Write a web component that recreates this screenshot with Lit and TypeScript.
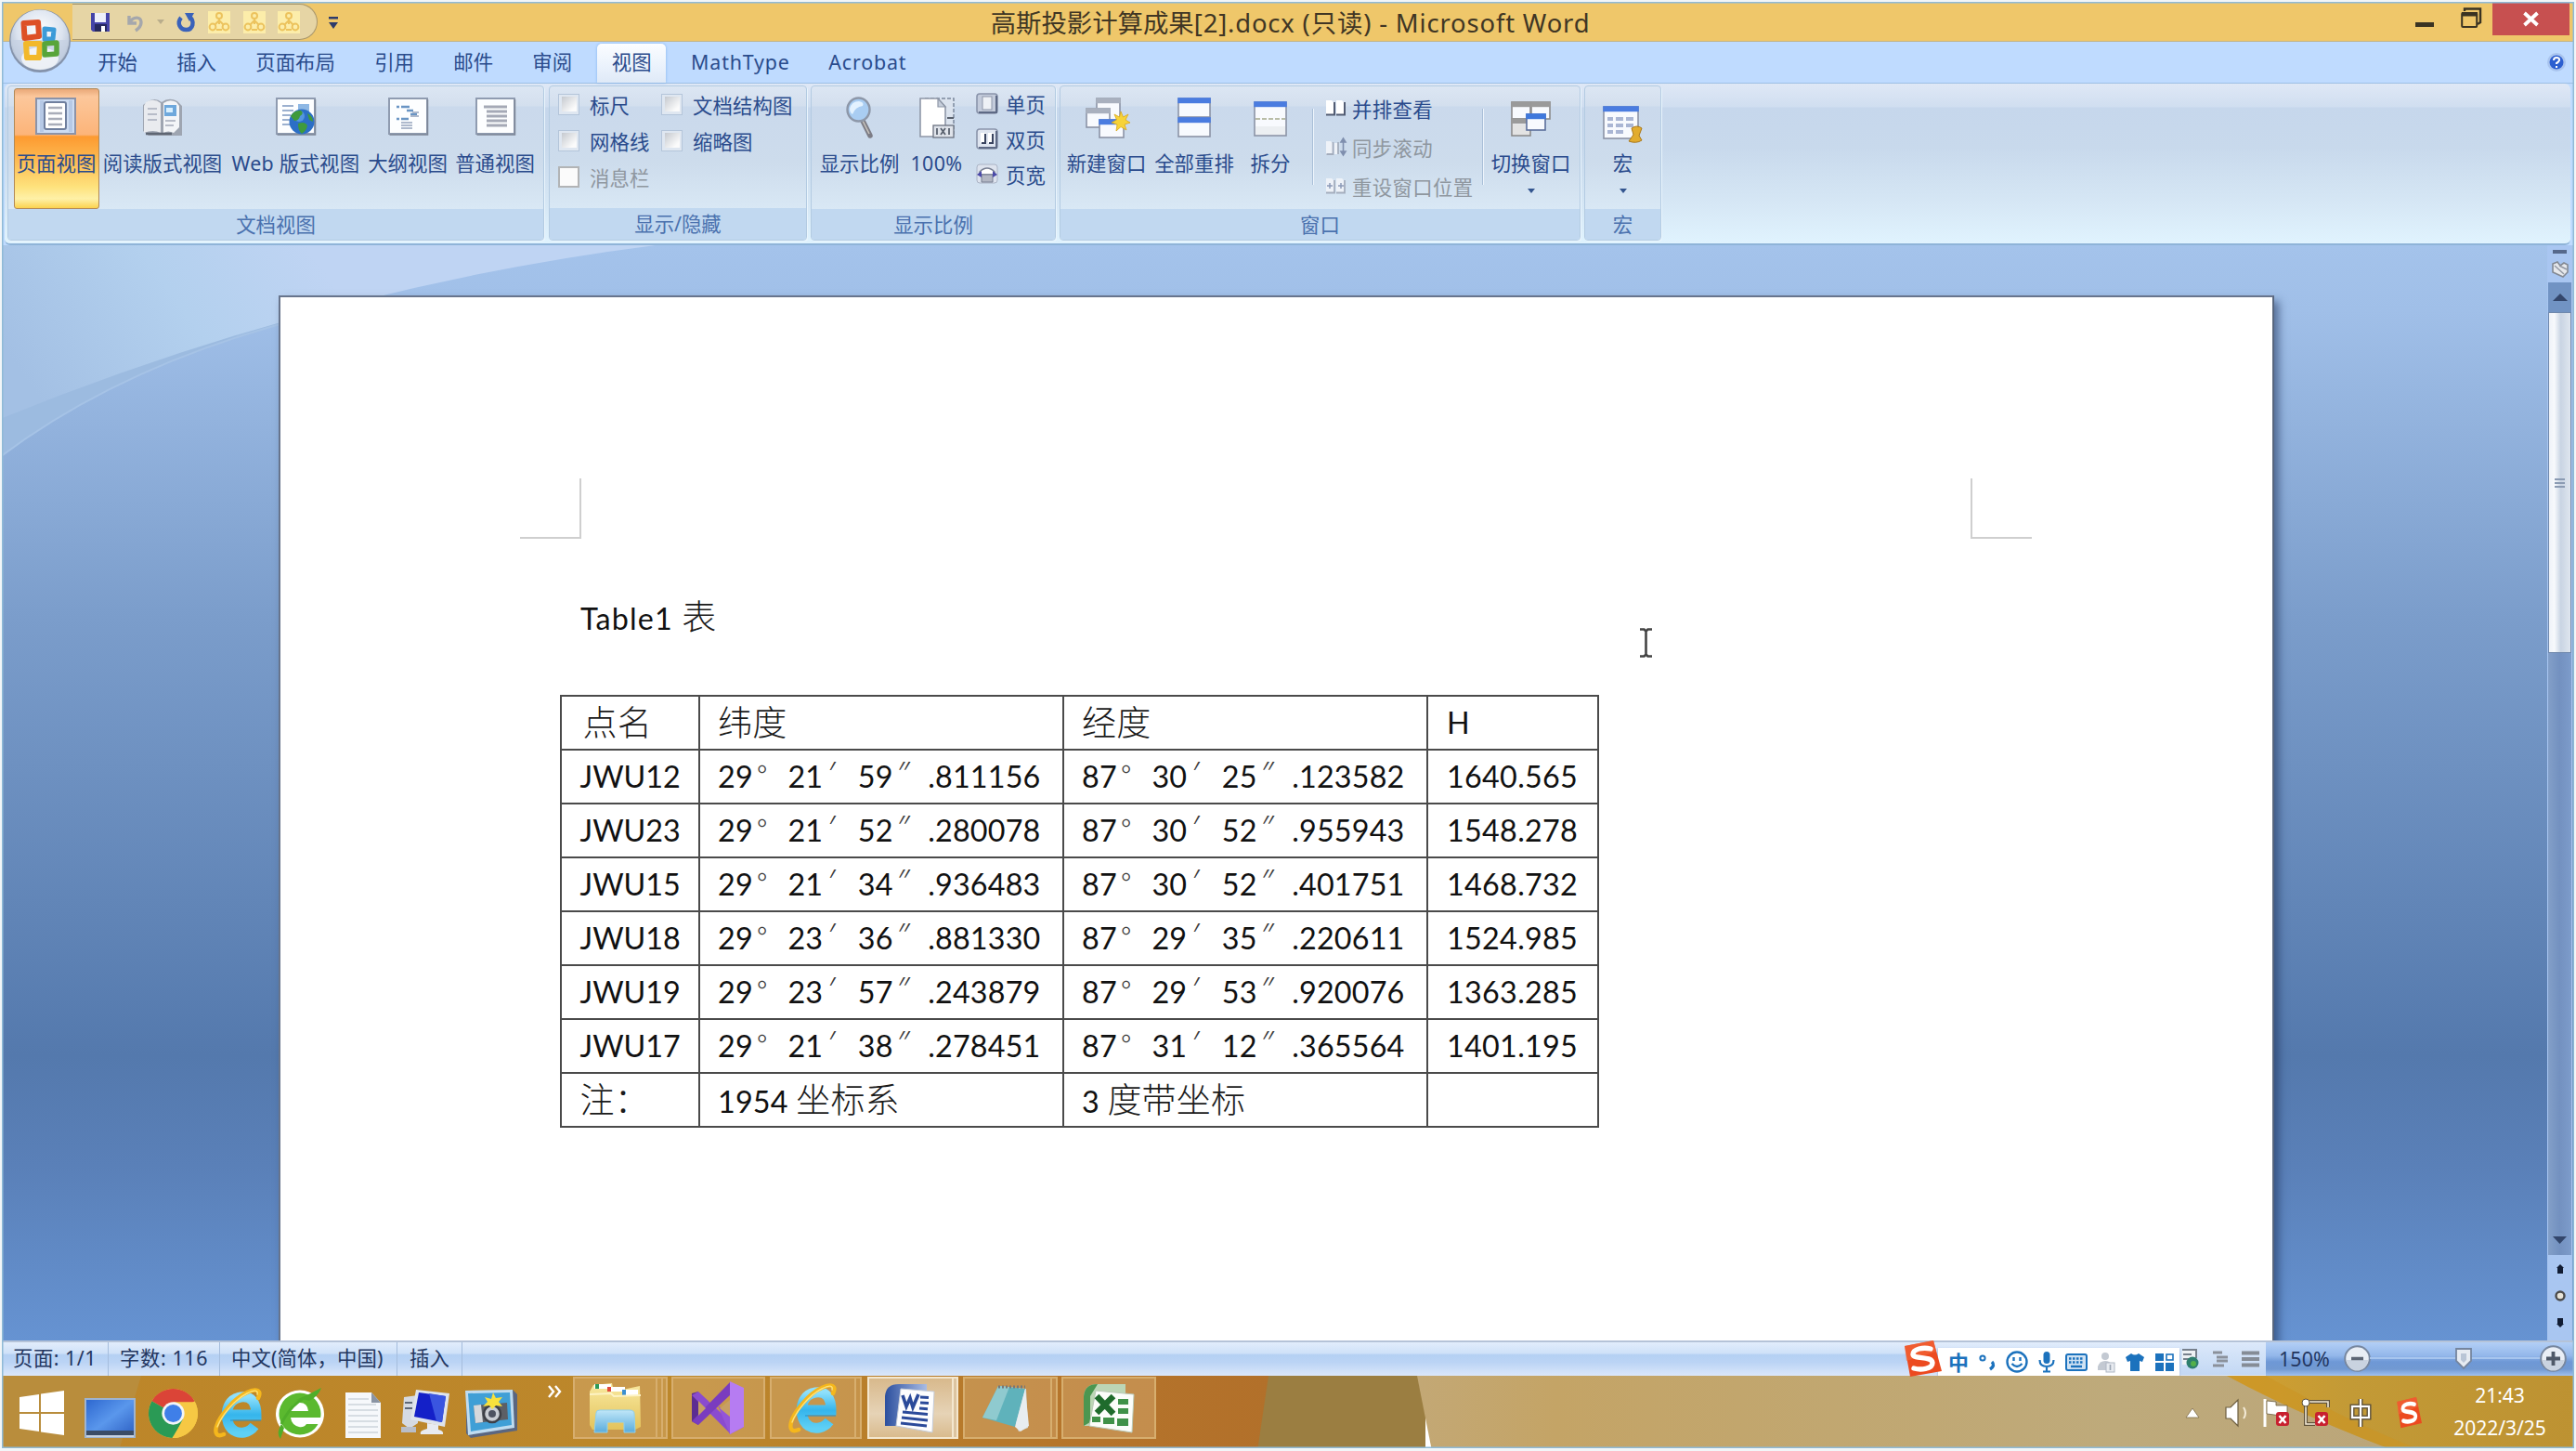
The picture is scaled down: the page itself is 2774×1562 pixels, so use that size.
import { LitElement, html, css, svg, nothing } from "lit";
import { customElement } from "lit/decorators.js";

const icon = (w: number, h: number, body: unknown, vb = `0 0 ${w} ${h}`) =>
  html`<svg class="ic" width=${w} height=${h} viewBox=${vb} preserveAspectRatio="none">${body}</svg>`;

/* ---------- artwork used in more than one place ---------- */
const ieMark = (id: string) => svg`
  <defs><linearGradient id=${id} x1="0" y1="0" x2="0" y2="1"><stop offset="0" stop-color="#8fe0fb"/><stop offset=".5" stop-color="#35b5ec"/><stop offset="1" stop-color="#5fd0f5"/></linearGradient></defs>
  <path fill="none" stroke="url(#${id})" stroke-width="11" d="M46 42C40 50 30 51 24 47C16 42 14 28 19 19C24 10 38 8 44 15C47 19 48 25 48 30L20 30"/>
  <path d="M53 36L20 36" stroke="#1e8fd0" stroke-width="1"/>
  <path fill="none" stroke="#f5b71c" stroke-width="4.5" stroke-linecap="round" d="M50 12C54 4 48 1 38 6C24 12 8 32 5 43C3 51 6 54 13 51"/>
  <path fill="none" stroke="#fde27a" stroke-width="1.4" stroke-linecap="round" d="M49 8C50 3 46 3 38 7C24 14 10 32 6 43"/>`;

const sogou = svg`
  <path d="M2 6L33 0L42 33L8 39Z" fill="#ec4a20"/><path d="M2 6L33 0L36 12L4 22Z" fill="#f4693c" opacity=".6"/>
  <path fill="none" stroke="#fff" stroke-width="5.4" stroke-linecap="round" d="M30 9C22 7 11 9 11 15C12 21 31 16 32 24C32 31 19 32 12 30"/>`;

const folder = svg`
  <defs><linearGradient id="fo" x1="0" y1="0" x2="0" y2="1"><stop offset="0" stop-color="#f9e99f"/><stop offset="1" stop-color="#e3c35c"/></linearGradient>
  <linearGradient id="fb" x1="0" y1="0" x2="0" y2="1"><stop offset="0" stop-color="#bfe6f8"/><stop offset="1" stop-color="#5aacdc"/></linearGradient></defs>
  <path d="M5 3L25 1L27 10L55 4L56 48L50 51L4 51L1 46L1 10Z" fill="url(#fo)"/>
  <path d="M6 2h18v5h-18z" fill="#fff"/><path d="M7 2h4v5h-4z" fill="#2d9a58"/>
  <path d="M20 5h19v5h-19z" fill="#fff"/><path d="M20 5h4v5h-4z" fill="#e04a3c"/>
  <path d="M36 8h17v6h-17z" fill="#fff"/><path d="M36 8h4v6h-4z" fill="#3b8fd0"/>
  <path d="M1 13L24 12L27 15L56 14" stroke="#fdf3c4" stroke-width="2" fill="none"/>
  <path d="M8 33Q8 30 12 30H44Q49 30 49 34L50 54H38V43H20V54H6Z" fill="url(#fb)" stroke="#8fd0ee" stroke-width="1"/>`;

const docStyles = css`
  .ic { display: block; flex: none; overflow: visible; }
`;

/* ================= title bar ================= */
@customElement("title-bar")
class TitleBar extends LitElement {
  static styles = [docStyles, css`
    :host { display: flex; height: 45px; background: #efc76a; box-sizing: border-box; border-bottom: 1px solid #c2b48a;
      font-family: "Noto Sans", "Noto Sans CJK SC", sans-serif; color: #403624; position: relative; }
    .qat { display: flex; align-items: center; height: 39px; margin-top: 4px; width: 264px; margin-left: 78px; box-sizing: border-box;
      border: 1.5px solid #a8966c; border-left: 0; border-radius: 0 20px 20px 0; background: #e6d5a5; padding-left: 19px; position: relative; }
    .gap1 { margin-left: 18px; } .gap3 { margin-left: 14px; } .gap4 { margin-left: 14px; } .gap5 { margin-left: 13.5px; }
    .more { margin: 17px 0 0 12px; }
    .title { position: absolute; left: 0; right: 0; top: 3px; text-align: center; font-size: 27.4px; line-height: 44px; white-space: nowrap; padding-left: 5px; }
    .title span { letter-spacing: .85px; }
    .win { margin-left: auto; display: flex; }
    .min { margin: 24px 29px 0 0; } .max { margin: 8px 12px 0 0; }
    .close { width: 83px; height: 35px; margin: 3px 7px 0 0; background: #c75050; display: flex; align-items: center; justify-content: center; }
  `];
  render() {
    const orgBox = (cls: string) => html`<div class=${cls}>${icon(24, 24, svg`<rect width="24" height="24" fill="#fcedaa"/>
      <g fill="none" stroke="#ecc35e" stroke-width="2"><circle cx="12" cy="5" r="3"/><circle cx="5" cy="17" r="3.4"/><circle cx="19" cy="17" r="3.4"/><path d="M12 8v6M12 10L7 15M12 10L17 15M9 20h6"/></g>`)}</div>`;
    return html`
      <div class="qat">
        ${icon(22, 22, svg`<path d="M1 1h20v20h-18l-2-2z" fill="#4544a8"/><rect x="5" y="1" width="12" height="10" fill="#eef0fb"/><rect x="5" y="13" width="13" height="8" fill="#26285e"/><rect x="12" y="15" width="4" height="6" fill="#fff"/>`)}
        <div class="gap1">${icon(18, 20, svg`<path d="M2 3v8h8M3 10C6 4 15 3 15 10C15 14 12 17 9 19" fill="none" stroke="#a5a7ac" stroke-width="3.4"/>`)}</div>
        <div class="gap3">${icon(8, 5, svg`<path d="M0 0h8l-4 5z" fill="#b9ad8c"/>`)}</div>
        <div class="gap4">${icon(19, 20, svg`<path d="M4 5C-1 11 3 18 9.500 18C17 18 19 9 13 4" fill="none" stroke="#3a62ba" stroke-width="4.400"/><path d="M8 0h10l-5 9z" fill="#3a62ba"/>`)}</div>
        ${orgBox("gap3")}${orgBox("gap5")}${orgBox("gap5")}
      </div>
      <div class="more">${icon(10, 15, svg`<path d="M0 1h10v2.500h-10zM0 7h10l-5 7z" fill="#2d3b6b"/>`)}</div>
      <div class="title">高斯投影计算成果<span>[2].docx (只读) - Microsoft Word</span></div>
      <div class="win">
        <div class="min">${icon(20, 5, svg`<rect width="20" height="5" fill="#3a3322"/>`)}</div>
        <div class="max">${icon(22, 22, svg`<path d="M4 4V1.500H21V16L18 18" fill="none" stroke="#3a3322" stroke-width="2.400"/><rect x="1.200" y="6" width="16" height="15" rx="1" fill="none" stroke="#3a3322" stroke-width="2"/><rect x="1" y="5" width="17" height="4.500" fill="#3a3322"/>`)}</div>
        <div class="close">${icon(17, 15, svg`<path d="M1.500 1L15.500 14M15.500 1L1.500 14" stroke="#fff" stroke-width="3.800"/>`)}</div>
      </div>`;
  }
}

/* ================= ribbon ================= */
const page = (body: unknown) => svg`<rect x="1" y="1" width="41" height="38" fill="#fdfeff" stroke="#8f9bb0" stroke-width="2"/>
  <path d="M42.500 2v38h-41" fill="none" stroke="#7d8797" stroke-width="1.500"/>${body}`;

const winPane = (x: number, y: number, w: number, h: number, bar: string, edge = "#8b93a6") => svg`
  <rect x=${x} y=${y} width=${w} height=${h} fill="#f8fafe" stroke=${edge} stroke-width="1.600"/>
  <rect x=${x - .8} y=${y - .8} width=${w + 1.6} height="6" fill=${bar}/>`;

const pictures: Record<string, unknown> = {
  print: icon(45, 40, svg`<rect x="1" y="1" width="42" height="38" fill="#cddcf2" stroke="#8c93a8" stroke-width="2"/><path d="M5 3h4v34h-4zM36 3h4v34h-4z" fill="#b6c9e6"/>
    <rect x="10" y="5" width="23" height="29" rx="2" fill="#fff" stroke="#6f7f9e" stroke-width="2"/><g stroke="#a9adb9" stroke-width="2.400"><path d="M14 11h15M14 17h15M14 23h15M14 29h15"/></g>`),
  read: icon(44, 42, svg`<path d="M5 5Q14 -1 21 5Q29 -1 38 4L43 9V41L7 41L1 36V8Z" fill="#9ea5b1"/><path d="M4 5Q13 0 20 6V38Q12 34 2 38V9Z" fill="#e9ebef"/><path d="M23 6Q30 1 37 5L40 9V32L34 38Q28 35 23 38Z" fill="#f3f5f8"/>
    <g stroke="#b7bcc8" stroke-width="2"><path d="M6 12h10M6 18h10M6 24h10M25 25h11M25 30h9"/></g><rect x="24" y="8" width="13" height="12" fill="#6ea8dc"/><rect x="26" y="11" width="7" height="5" fill="#d8f0ff"/><path d="M4 39h28" stroke="#5e6673" stroke-width="2.400"/>`),
  web: icon(44, 41, svg`${page(svg`<g stroke="#9bb0cf" stroke-width="2"><path d="M7 9h12M7 14h12M7 19h9M7 24h8M7 29h8"/></g><rect x="24" y="7" width="12" height="8" fill="#8db7e4"/>`)}
    <circle cx="28" cy="26" r="13.500" fill="#2c6fc6"/><circle cx="25" cy="20" r="6" fill="#6fb0f0" opacity=".6"/><path d="M16 20Q20 13 27 14Q31 17 26 20Q25 25 20 25ZM24 28Q31 25 34 30Q33 36 28 39Q24 36 24 28ZM34 17Q40 20 40 26L36 24Z" fill="#3f9a3c"/>`),
  outline: icon(43, 40, page(svg`<g stroke="#6a95c4" stroke-width="2.400"><path d="M9 10h3M14 10h9M20 14h7M24 18h7M9 23h3M14 23h8"/></g><g stroke="#aeb9cc" stroke-width="2"><path d="M26 16h7M24 20h9M14 27h12M14 30h12M14 33h12"/></g>`)),
  draft: icon(43, 40, page(svg`<g stroke="#a5a9b6" stroke-width="3"><path d="M9 10h25M12 15h22M12 20h22M12 25h22M12 30h22"/></g>`)),
  zoom: icon(30, 44, svg`<path d="M17 23L26 41" stroke="#7d7d86" stroke-width="5.500" stroke-linecap="round"/><path d="M18 25L25 39" stroke="#c9c4bd" stroke-width="1.500"/><ellipse cx="13.500" cy="13" rx="12" ry="12.500" fill="#a9cdf2" stroke="#8d97a8" stroke-width="2.400"/><path d="M4 12Q6 4 14 4Q20 5 18 9Q10 10 7 18Q4 16 4 12Z" fill="#e3f2ff"/>`),
  hundred: icon(38, 44, svg`<rect x="6" y="1" width="31" height="38" fill="#dbe3ee" stroke="#7b889c" stroke-width="1.500" stroke-dasharray="4 2"/><path d="M1 1H20L28 10V42H1Z" fill="#fff" stroke="#8e97a7" stroke-width="1.600"/><path d="M20 1V10H28Z" fill="#c6cedb" stroke="#8e97a7" stroke-width="1.200"/><rect x="15" y="30" width="22" height="13" fill="#dfe3ea" stroke="#6b7280" stroke-width="1.300"/><path d="M19 33v7M23 33l5 7M28 33l-5 7M32 33v7M30 22h7" stroke="#59616e" stroke-width="1.800"/>`),
  newwin: icon(46, 44, svg`${winPane(12, 1, 25, 24, "#a9b0be")}${winPane(1, 12, 25, 20, "#a9b0be")}${winPane(15, 24, 26, 19, "#4a7ce0")}
    <path d="M38 15L40.500 21L46 18L43 24L48 27L42 29L44 35L38 31.500L33 36L34 29L28 27L33.500 24L31 18L36.500 21Z" fill="#f7d338" stroke="#d9a81c" stroke-width=".8"/>`),
  arrange: icon(36, 44, svg`${winPane(1, 1, 34, 20, "#4a7ce0")}${winPane(1, 22, 34, 20, "#4a7ce0")}`),
  split: icon(36, 38, svg`${winPane(1, 1, 34, 36, "#4a7ce0")}<path d="M2 19h32" stroke="#b9bda8" stroke-width="2" stroke-dasharray="5 2"/><path d="M2 27h32v9h-32z" fill="#eceff2"/>`),
  switch: icon(44, 40, svg`${winPane(1, 1, 20, 18, "#9a9a9a", "#8a8a8a")}${winPane(22, 1, 20, 18, "#9a9a9a", "#8a8a8a")}${winPane(1, 19, 20, 18, "#9a9a9a", "#8a8a8a")}<rect x="2" y="25" width="18" height="11" fill="#e3e3e3"/>${winPane(17, 14, 20, 17, "#3f78dc", "#5a6f9c")}`),
  macro: icon(44, 40, svg`${winPane(1, 1, 37, 34, "#4a7ce0")}<g fill="#aab6d4"><path d="M5 12h6v4h-6zM14 12h8v4h-8zM25 12h8v4h-8zM5 19h6v4h-6zM14 19h8v4h-8zM25 19h8v4h-8zM5 26h6v4h-6zM14 26h8v4h-8z"/></g><path d="M31 24Q37 20 42 24L39 32L42 37Q36 41 28 38L33 31Z" fill="#e2ac2f" stroke="#a9771a" stroke-width="1"/>`),
};

const smallPics: Record<string, unknown> = {
  one: icon(24, 23, svg`<rect x="1" y="1" width="22" height="21" rx="3" fill="#c3cbdb" stroke="#8a94ab" stroke-width="1.600"/><path d="M22 3v18h-19" fill="none" stroke="#5d6985" stroke-width="2"/><rect x="7" y="4" width="10" height="14" fill="#eef1f6" stroke="#8f98ab"/>`),
  two: icon(24, 23, svg`<rect x="1" y="1" width="22" height="21" rx="3" fill="#dfe5f0" stroke="#8a94ab" stroke-width="1.600"/><path d="M22 3v18h-19" fill="none" stroke="#5d6985" stroke-width="2"/><path d="M5 5h6v11h-6zM13 5h6v11h-6z" fill="#fff"/><path d="M10 6v10h-4M18 6v10h-4" fill="none" stroke="#39435f" stroke-width="2"/>`),
  width: icon(24, 23, svg`<rect x="1" y="1" width="22" height="20" rx="3" fill="#dde3ee" stroke="#aab3c4"/><path d="M4 9Q12 1 20 9V12H4Z" fill="#fff" stroke="#777f92" stroke-width="1.500"/><path d="M6 12h12v8h-12z" fill="#b3b7c3" stroke="#777f92"/><path d="M1 12L6 8V15ZM23 12L18 8V15Z" fill="#4a49a8"/>`),
  side: icon(23, 20, svg`<path d="M1 2h6l3 3v12h-9zM12 2h6l3 3v12h-9z" fill="#fff"/><path d="M10 4v13.500h-9M21 4v13.500h-9" fill="none" stroke="#525c73" stroke-width="2"/>`),
  sync: icon(23, 20, svg`<path d="M1 4h5l3 3v11h-8zM10 6h4v12h-4z" fill="#eef2f8"/><path d="M8.500 5v13h-7M14 5v13" fill="none" stroke="#a4adbd" stroke-width="1.800"/><path d="M19.500 2v16M17 5l2.500-4l2.500 4zM17 15l2.500 4l2.500-4z" stroke="#7f8fae" stroke-width="1.600" fill="#7f8fae"/>`),
  reset: icon(23, 20, svg`<path d="M1 2h6l3 3v12h-9zM12 2h6l3 3v12h-9z" fill="#eef2f8"/><path d="M10 4v13.500h-9M21 4v13.500h-9" fill="none" stroke="#a4adbd" stroke-width="1.800"/><path d="M2 10h6M5 7v6M14 10h6M17 7v6" stroke="#8d9bb8" stroke-width="1.500"/>`),
};

@customElement("word-ribbon")
class WordRibbon extends LitElement {
  static styles = [docStyles, css`
    :host { display: block; font-family: "Noto Sans", "Noto Sans CJK SC", sans-serif; font-size: 21.4px; color: #2a4b8c; background: #bfdbff; white-space: nowrap; }
    .tabs { display: flex; height: 45px; box-sizing: border-box; padding: 3px 0 0 84px; align-items: flex-end; border-bottom: 1px solid #9dbfe4; }
    .tab { padding: 0 21.150px; height: 42px; line-height: 40px; }
    .tab.lat { letter-spacing: .85px; padding: 0 20.500px 0 21px; }
    .tab.on { padding: 0 15.500px; margin: 0 6px; background: linear-gradient(#fbfdff, #eaf2fc 60%, #dfe9f7); border-radius: 5px 5px 0 0; box-shadow: 0 0 3px #7fb0ea; }
    .help { margin-left: auto; margin-right: 11px; align-self: center; margin-top: -3px; }
    .body { display: flex; gap: 4px; height: 174px; box-sizing: border-box; margin: 0 6px 0 5px; padding: 2px 0 3px 3px; border-bottom: 2px solid #8fb4d8;
      border-radius: 6px; background: linear-gradient(#dfe8f6 0, #d0def0 25px, #c6d7ec 26px, #c8d9ec 40%, #d6e7f5 75%, #e0f3fe 100%); }
    .group { display: flex; flex-direction: column; box-sizing: border-box; border: 1px solid #b3cbe2; border-radius: 4px; box-shadow: 1px 1px 0 #eaf5fd;
      background: linear-gradient(#dce6f3 0, #d3dfee 21px, #cad9ec 22px, #cddcec 50%, #d9e8f5 132px); overflow: hidden; }
    .g1 { width: 578px; } .g2 { width: 278px; margin-left: 1px; } .g3 { width: 264px; } .g4 { width: 561px; } .g5 { width: 83px; }
    .row { display: flex; flex: 1; }
    .label { height: 34px; line-height: 34px; text-align: center; background: #c1d8f0; color: #4a71ae; }
    .g1 .row { padding-left: 5.500px; }
    .big { display: flex; flex-direction: column; align-items: center; height: 130px; margin-top: 2px; box-sizing: border-box; flex: none; }
    .pic { height: 49px; padding-top: 10px; }
    .split, .switch { margin-top: 4px; } .macro { margin-top: 9px; }
    .cap { line-height: 30px; margin-top: 7px; }
    .big.on { border: 1px solid #b28a58; border-radius: 3px; background: linear-gradient(#e9a878 0, #fcc79b 8px, #fcb479 49px, #fd9a30 51px, #fdb850 75px, #fee27c 105px, #fef1a8 118px, #fbd24e 100%); }
    .big.on .pic { padding-top: 9px; }
    .w92 { width: 92px; } .w137 { width: 137px; } .w150 { width: 150px; letter-spacing: .25px; } .w91 { width: 91px; } .w97 { width: 97px; }
    .wz { width: 105px; margin-left: -1px; } .wh { width: 61px; letter-spacing: .4px; } .wn { width: 99px; } .wa { width: 90px; } .ws { width: 74px; } .wc { width: 101px; } .wm { width: 81px; }
    .checks { display: grid; grid-template-columns: 111px auto; grid-auto-rows: 38.900px; align-content: start; padding: 0 0 0 9px; letter-spacing: .1px; }
    .check { display: flex; align-items: center; gap: 11px; height: 38.900px; }
    .box { width: 23px; height: 23px; box-sizing: border-box; border: 1.500px solid #b4c5da; background: #dfe7f1; padding: 2.500px; }
    .box i { display: block; width: 100%; height: 100%; background: linear-gradient(135deg, #c5c9cf, #fbfbfb 80%); }
    .box.off { border: 2px solid #b2b4b6; background: #fbfbfb; } .box.off i { background: #fbfbfb; }
    .dim { color: #8f979f; }
    .stack { display: flex; flex-direction: column; }
    .smalls { padding: 0 0 0 12px; margin-top: -1px; }
    .small { display: flex; align-items: center; gap: 8px; height: 38px; }
    .tall { padding: 2px 0 0 12px; width: 181px; box-sizing: border-box; letter-spacing: .35px; } .tall .small { height: 42px; gap: 6px; }
    .bar { width: 1px; height: 82px; background: #a9bfd8; border-right: 1px solid #eef5fc; margin-top: 24px; flex: none; }
    .bar.first { margin-left: 8px; }
    .arr { margin-top: 12px; }
  `];
  big(p: string, text: string, cls: string, arrow = false) {
    return html`<div class="big ${cls}"><div class="pic"><div class=${p}>${pictures[p]}</div></div><div class="cap">${text}</div>
      ${arrow ? html`<div class="arr">${icon(8, 5, svg`<path d="M0 0h8l-4 5z" fill="#33558f"/>`)}</div>` : nothing}</div>`;
  }
  check(text: string, off = false) {
    return html`<div class="check ${off ? "dim" : ""}"><div class="box ${off ? "off" : ""}"><i></i></div>${text}</div>`;
  }
  small(p: string, text: string, off = false) {
    return html`<div class="small ${off ? "dim" : ""}">${smallPics[p]}${text}</div>`;
  }
  render() {
    return html`
      <div class="tabs">
        ${["开始", "插入", "页面布局", "引用", "邮件", "审阅"].map((t) => html`<div class="tab">${t}</div>`)}
        <div class="tab on">视图</div><div class="tab lat">MathType</div><div class="tab lat">Acrobat</div>
        <div class="help">${icon(20, 22, svg`<circle cx="10" cy="11" r="10" fill="#a9c4ee"/><circle cx="10" cy="11" r="7.500" fill="#2c5fd0"/><path d="M7 9Q7 6 10 6Q13.500 6 13 9Q12 11 10 12V13M10 15v2" fill="none" stroke="#fff" stroke-width="2"/>`)}</div>
      </div>
      <div class="body">
        <div class="group g1"><div class="row">
          ${this.big("print", "页面视图", "w92 on")}${this.big("read", "阅读版式视图", "w137")}${this.big("web", "Web 版式视图", "w150")}${this.big("outline", "大纲视图", "w91")}${this.big("draft", "普通视图", "w97")}
        </div><div class="label">文档视图</div></div>
        <div class="group g2"><div class="row checks">
          ${this.check("标尺")}${this.check("文档结构图")}${this.check("网格线")}${this.check("缩略图")}${this.check("消息栏", true)}
        </div><div class="label">显示/隐藏</div></div>
        <div class="group g3"><div class="row">
          ${this.big("zoom", "显示比例", "wz")}${this.big("hundred", "100%", "wh")}
          <div class="stack smalls">${this.small("one", "单页")}${this.small("two", "双页")}${this.small("width", "页宽")}</div>
        </div><div class="label">显示比例</div></div>
        <div class="group g4"><div class="row">
          ${this.big("newwin", "新建窗口", "wn")}${this.big("arrange", "全部重排", "wa")}${this.big("split", "拆分", "ws")}
          <div class="bar first"></div>
          <div class="stack tall">${this.small("side", "并排查看")}${this.small("sync", "同步滚动", true)}${this.small("reset", "重设窗口位置", true)}</div>
          <div class="bar"></div>
          ${this.big("switch", "切换窗口", "wc", true)}
        </div><div class="label">窗口</div></div>
        <div class="group g5"><div class="row">${this.big("macro", "宏", "wm", true)}</div><div class="label">宏</div></div>
      </div>`;
  }
}

/* ================= document ================= */
const points = [
  ["JWU12", "29", "21", "59", ".811156", "87", "30", "25", ".123582", "1640.565"],
  ["JWU23", "29", "21", "52", ".280078", "87", "30", "52", ".955943", "1548.278"],
  ["JWU15", "29", "21", "34", ".936483", "87", "30", "52", ".401751", "1468.732"],
  ["JWU18", "29", "23", "36", ".881330", "87", "29", "35", ".220611", "1524.985"],
  ["JWU19", "29", "23", "57", ".243879", "87", "29", "53", ".920076", "1363.285"],
  ["JWU17", "29", "21", "38", ".278451", "87", "31", "12", ".365564", "1401.195"],
];

@customElement("doc-view")
class DocView extends LitElement {
  static styles = [docStyles, css`
    :host { display: flex; position: relative; height: 1179px; overflow: hidden;
      background: linear-gradient(#a4c3eb 0, #a0bfe8 6%, #7b9dcb 34%, #5479ad 74%, #5a80b8 84%, #6693d2 100%);
      font-family: Lato, "Noto Sans CJK SC", sans-serif; color: #111; }
    .swoosh { position: absolute; left: 0; top: 0; }
    .page { position: relative; margin: 54px 0 0 300px; width: 2149px; height: 1130px; box-sizing: border-box; background: #fff;
      border: 2px solid #67748c; border-right-color: #59677f; box-shadow: 5px 6px 9px rgba(25, 45, 85, .55); padding: 195px 259px 0 258px; }
    .marks { display: flex; justify-content: space-between; height: 65px; }
    .mark { width: 66px; box-sizing: border-box; border-bottom: 2px solid #cfcfcf; }
    .tl { border-right: 2px solid #cfcfcf; } .tr { border-left: 2px solid #cfcfcf; }
    .caption { margin: 57px 0 0 65px; font-size: 32.3px; line-height: 54px; height: 54px; white-space: pre; letter-spacing: 1.150px; }
    .cn { font-family: "Noto Sans CJK SC", sans-serif; font-weight: 300; font-size: 37px; line-height: 50px; letter-spacing: .200px; color: #1a1a1a; }
    .name { text-indent: 3px; }
    table { border-collapse: collapse; table-layout: fixed; width: 1117px; margin: 57px 0 0 43px; font-size: 32.3px; }
    td { border: 2px solid #4a4a4a; height: 58.050px; padding: 0 0 0 19.500px; box-sizing: border-box; white-space: nowrap; line-height: 54px; vertical-align: middle; }
    td > div { height: 54px; overflow: visible; }
    .c1 { width: 148.500px; } .c2 { width: 392px; } .c4 { width: 184px; }
    .n { letter-spacing: .200px; } .h { letter-spacing: .300px; padding-left: 1px; }
    .deg, .min, .sec { display: inline-block; width: 37.500px; line-height: 0; height: 0; color: #3c3c3c; letter-spacing: 0; font-weight: 300; }
    .deg { text-indent: 4px; font-family: "Noto Sans CJK SC", sans-serif; }
    .min, .sec { font-family: "Noto Sans", sans-serif; font-size: 35px; position: relative; top: -3px; }
    .min { text-indent: 6px; } .sec { text-indent: 5px; }
    .cursor { position: absolute; left: 1464px; top: 356px; }
    .side { margin-left: auto; width: 27px; margin-right: 4px; display: flex; flex-direction: column; align-items: center; background: #a9c6f1; }
    .side .dash { margin-top: 5px; } .side .ruler { margin-top: 8px; }
    .up { width: 25px; height: 32px; margin-top: 5px; background: #7193c3; display: flex; align-items: center; justify-content: center; }
    .thumb { width: 23px; height: 365px; border: 1px solid #6f88ac; background: linear-gradient(90deg, #eef2f8, #f7f9fc 25%, #c9d4e3 55%, #dfe6ef); display: flex; align-items: center; justify-content: center; }
    .track { width: 25px; height: 648px; box-sizing: border-box; background: linear-gradient(90deg, #839fc8, #7391c0 50%, #7d9ccb); display: flex; align-items: flex-end; justify-content: center; padding-bottom: 12px; }
    .nav { margin-top: 10px; display: flex; flex-direction: column; gap: 18px; align-items: center; }
  `];
  dms(d: string[]) {
    return html`<div class="n">${d[0]}<span class="deg">°</span>${d[1]}<span class="min">′</span>${d[2]}<span class="sec">″</span>${d[3]}</div>`;
  }
  render() {
    return html`
      <svg class="swoosh" width="720" height="240" viewBox="0 0 720 240">
        <defs><linearGradient id="sw" gradientUnits="userSpaceOnUse" x1="60" y1="190" x2="330" y2="0"><stop offset="0" stop-color="#a3c0e4"/><stop offset=".55" stop-color="#b3d0ee"/><stop offset="1" stop-color="#bfd4f3"/></linearGradient></defs>
        <path d="M0 228Q130 130 320 80L300 60L0 180Z" fill="#9cbbe0"/><path d="M0 228Q130 130 320 80" fill="none" stroke="#a6c3e6" stroke-width="2"/>
        <path d="M0 0H706Q350 45 0 187Z" fill="url(#sw)"/>
      </svg>
      <div class="page">
        <div class="marks"><div class="mark tl"></div><div class="mark tr"></div></div>
        <div class="caption">Table1 <span class="cn">表</span></div>
        <table>
          <colgroup><col class="c1"><col class="c2"><col class="c2"><col class="c4"></colgroup>
          <tr><td><div class="cn name">点名</div></td><td><div class="cn">纬度</div></td><td><div class="cn">经度</div></td><td><div class="h">H</div></td></tr>
          ${points.map((p) => html`<tr><td><div>${p[0]}</div></td><td>${this.dms(p.slice(1, 5))}</td><td>${this.dms(p.slice(5, 9))}</td><td><div class="h">${p[9]}</div></td></tr>`)}
          <tr><td><div class="cn">注：</div></td><td><div class="n">1954 <span class="cn">坐标系</span></div></td><td><div class="n">3 <span class="cn">度带坐标</span></div></td><td></td></tr>
        </table>
        <div class="cursor">${icon(13, 32, svg`<path d="M0 1.500H4.500L6.500 3.500L8.500 1.500H13M6.500 3V29M0 30.500H4.500L6.500 28.500L8.500 30.500H13" fill="none" stroke="#444" stroke-width="2.600"/>`)}</div>
      </div>
      <div class="side">
        <div class="dash">${icon(15, 4, svg`<rect width="15" height="4" fill="#56698c"/>`)}</div>
        <div class="ruler">${icon(18, 18, svg`<path d="M1 3L6 1L9 5L13 2L17 4V12L12 17L1 12Z" fill="#e6e8ec" stroke="#838993" stroke-width="1.600"/><path d="M3 5L13 14M8 5L16 9" stroke="#9298a3" stroke-width="1.500"/>`)}</div>
        <div class="up">${icon(16, 8, svg`<path d="M0 8h16l-8-8z" fill="#33466b"/>`)}</div>
        <div class="thumb">${icon(11, 10, svg`<path d="M0 1h11M0 5h11M0 9h11" stroke="#8b9bb3" stroke-width="1.800"/>`)}</div>
        <div class="track">${icon(15, 8, svg`<path d="M0 0h15l-7.500 8z" fill="#33466b"/>`)}</div>
        <div class="nav">
          ${icon(8, 10, svg`<path d="M4 0l4 4h-1v6h-6v-6h-1z" fill="#111c33"/>`)}
          ${icon(12, 12, svg`<circle cx="6" cy="6" r="4.500" fill="#e8e4d8" stroke="#4a4a4a" stroke-width="2.400"/>`)}
          ${icon(8, 10, svg`<path d="M4 10l4-4h-1v-6h-6v6h-1z" fill="#111c33"/>`)}
        </div>
      </div>`;
  }
}

/* ================= status bar ================= */
@customElement("status-bar")
class StatusBar extends LitElement {
  static styles = [docStyles, css`
    :host { display: flex; position: relative; height: 38px; box-sizing: border-box; border-top: 2px solid #b5c3d8; font-family: "Noto Sans", "Noto Sans CJK SC", sans-serif; font-size: 21.4px; letter-spacing: .1px; color: #23365f;
      background: linear-gradient(#e2edfc 0, #cfe1f8 32%, #b4d0f3 38%, #bbd4f5 60%, #dbe7fa 100%); white-space: nowrap; }
    .cell { box-sizing: border-box; line-height: 33px; border-right: 1px solid #a5bddd; }
    .a { width: 117px; padding-left: 14px; letter-spacing: .5px; } .b { width: 120px; padding-left: 12px; letter-spacing: .6px; } .c { width: 191px; padding-left: 12px; } .d { width: 70px; padding-left: 13px; }
    .views { margin-left: auto; width: 92px; height: 34px; margin-top: 1px; background: linear-gradient(#dbe8fa, #c3d8f4); display: flex; align-items: center; justify-content: space-between; padding: 0 7px 0 2px; box-sizing: border-box; }
    .zoombar { width: 334px; box-sizing: border-box; padding: 0 10px 2px 14px; display: flex; align-items: center;
      background: linear-gradient(#b3cff6 0, #93b7ea 40%, #6e98d6 58%, #7199d2 80%, #a0c1f0 100%); }
    .pct { width: 70px; line-height: 35px; letter-spacing: .1px; }
    .slide { flex: 1; height: 2px; background: #a7c5ee; display: flex; align-items: center; justify-content: center; padding-left: 18px; margin: 0 -1px; }
    .ime { position: absolute; left: 2049px; top: 0; display: flex; align-items: center; height: 38px; }
    .tray { position: relative; display: flex; align-items: center; height: 31px; margin: 4px 0 0 -4px; width: 260px; background: #fff; padding-left: 11px; box-sizing: border-box; color: #1c72bd; font-weight: 700; box-shadow: 0 1px 2px #8aa6cc; }
    .cj { width: 32px; font-size: 22px; line-height: 28px; letter-spacing: 0; }
    .slot { width: 31.800px; display: flex; justify-content: center; flex: none; }
    .logo { position: relative; z-index: 1; margin-top: -2px; }
  `];
  render() {
    const round = (sign: unknown) => icon(29, 29, svg`<circle cx="14.500" cy="14.500" r="13.300" fill="#e9eef5" stroke="#77879f" stroke-width="2"/><path d="M3 16a11.500 11.500 0 0 0 23 0z" fill="#c9d3e0"/>${sign}`);
    return html`
      <div class="cell a">页面: 1/1</div><div class="cell b">字数: 116</div><div class="cell c">中文(简体，中国)</div><div class="cell d">插入</div>
      <div class="views">
        ${icon(18, 22, svg`<rect width="14" height="17" fill="#eef1f4"/><path d="M0 1h15v9M1 6h9M1 11h6" fill="none" stroke="#77808c" stroke-width="2"/><circle cx="11" cy="15" r="6.500" fill="#2e7f6e"/><circle cx="12" cy="16" r="3" fill="#53b04a"/>`)}
        ${icon(17, 18, svg`<path d="M0 2h10M4 7h12M4 11h12M0 16h12" stroke="#8b919b" stroke-width="3"/>`)}
        ${icon(19, 18, svg`<path d="M0 2.500h19M0 9h19M0 15.500h19" stroke="#858c96" stroke-width="4"/>`)}
      </div>
      <div class="zoombar"><div class="pct">150%</div>${round(svg`<path d="M8 14.500h13" stroke="#5d6675" stroke-width="3.500"/>`)}
        <div class="slide">${icon(18, 23, svg`<path d="M1 1h16v13l-8 8l-8-8z" fill="#e6ebf2" stroke="#75859e" stroke-width="1.800"/><path d="M6 6h6v7l-3 3l-3-3z" fill="#b9c5d6"/>`)}</div>
        ${round(svg`<path d="M7 14.500h15M14.500 7v15" stroke="#4f5968" stroke-width="3.800"/>`)}</div>
      <div class="ime"><div class="logo">${icon(42, 40, sogou)}</div>
        <div class="tray"><div class="cj">中</div>
          <div class="slot">${icon(18, 18, svg`<circle cx="4" cy="5" r="2.600" fill="none" stroke="#1c72bd" stroke-width="2"/><path d="M14 9q4 4-2 8" fill="none" stroke="#1c72bd" stroke-width="3.400"/>`)}</div>
          <div class="slot">${icon(24, 24, svg`<circle cx="12" cy="12" r="10.500" fill="none" stroke="#1c72bd" stroke-width="2.400"/><path d="M8.500 7v4M15.500 7v4M6.500 14q5.500 6 11 0" fill="none" stroke="#1c72bd" stroke-width="2.400"/>`)}</div>
          <div class="slot">${icon(18, 24, svg`<rect x="5.500" y="1" width="7" height="13" rx="3.500" fill="#1c72bd"/><path d="M1.500 10q0 7 7.500 7t7.500-7M9 17v6M5 22.500h8" fill="none" stroke="#1c72bd" stroke-width="2.200"/>`)}</div>
          <div class="slot">${icon(24, 19, svg`<rect x="1" y="1" width="22" height="17" rx="2" fill="#cfe2f3" stroke="#1c72bd" stroke-width="2"/><path d="M4 5.500h16M4 9.500h16" stroke="#1c72bd" stroke-width="2.400" stroke-dasharray="2.500 1.500"/><path d="M6 14h12" stroke="#1c72bd" stroke-width="2.400"/>`)}</div>
          <div class="slot">${icon(20, 22, svg`<circle cx="9" cy="5" r="4" fill="#c3c9d2"/><path d="M1 20v-4q2-6 8-6q5 0 7 4v6z" fill="#c3c9d2"/><rect x="10" y="12" width="9" height="10" fill="#e8ebf0" stroke="#b0b8c4"/><path d="M14.500 14v6" stroke="#9aa4b3" stroke-width="1.600"/>`)}</div>
          <div class="slot">${icon(20, 20, svg`<path d="M6 1Q10 4 14 1L20 5L18 10L15 9V20H5V9L2 10L0 5Z" fill="#1c72bd"/>`)}</div>
          <div class="slot">${icon(20, 20, svg`<path d="M0 1h9v8h-9zM0 11h9v9h-9zM11 11h9v9h-9z" fill="#1c72bd"/><rect x="12" y="2" width="7" height="6" fill="#fff" stroke="#1c72bd" stroke-width="1.600"/>`)}</div>
        </div></div>`;
  }
}

/* ================= task bar ================= */
@customElement("task-bar")
class TaskBar extends LitElement {
  static styles = [docStyles, css`
    :host { display: flex; height: 81px; position: relative; color: #fff; font-family: "Noto Sans", "Noto Sans CJK SC", sans-serif; }
    .bg { position: absolute; left: 0; top: 0; }
    .row { position: relative; display: flex; width: 100%; }
    .quick { display: flex; padding-left: 21px; height: 80px; align-items: center; width: 596px; box-sizing: content-box; }
    .s1 { margin-left: 22px; margin-top: 10px; } .s2 { margin-left: 14px; } .s3 { margin-left: 15px; } .s4 { margin-left: 15px; } .s5 { margin-left: 22px; margin-top: 4px; } .s6 { margin-left: 22px; } .s7 { margin-left: 15px; }
    .chev { margin-left: 33px; margin-bottom: 46px; }
    .task { box-sizing: border-box; height: 67px; margin-top: 1px; border: 2px solid #d7ae6e; background: rgba(214, 176, 120, .45); display: flex; align-items: center; flex: none; }
    .task.on { background: linear-gradient(#d8b98c, #e6d3b6 60%, #d9bb8e); border-color: #f4e7cf; }
    .edge { height: 67px; margin-top: 1px; width: 5.500px; box-sizing: border-box; border: 2px solid #d7ae6e; border-left: 0; background: rgba(214, 176, 120, .4); }
    .edge.on { border-color: #f4e7cf; background: #dcc4a0; }
    .t1 { width: 91px; padding-left: 15px; } .t2 { width: 101px; margin-left: 4px; padding-left: 18px; } .t3 { width: 93px; margin-left: 5px; padding-left: 16px; }
    .t4 { width: 93px; margin-left: 6px; padding-left: 16px; } .t5 { width: 96px; margin-left: 5px; padding-left: 18px; } .t6 { width: 102px; margin-left: 4px; padding-left: 21px; }
    .sys { margin-left: auto; display: flex; align-items: center; height: 80px; }
    .clock { width: 130px; margin: -2px 17px 0 19px; text-align: center; font-size: 21px; line-height: 35px; }
    .vol { margin-left: 28px; } .flag { margin-left: 15px; } .net { margin-left: 12px; }
    .zh { width: 25px; margin: 0 25px 0 21px; }
  `];
  render() {
    const cross = svg`<rect x="14" y="15" width="14" height="15" rx="3" fill="#c8202f"/><path d="M17.500 19l7 8M24.500 19l-7 8" stroke="#fff" stroke-width="2.600"/>`;
    return html`
      <svg class="bg" width="2774" height="81" viewBox="0 0 2774 81" preserveAspectRatio="none">
        <defs>
          <linearGradient id="b1" x1="0" x2="1" y1="0" y2="0"><stop offset="0" stop-color="#bd8629"/><stop offset=".55" stop-color="#bc872b"/><stop offset=".85" stop-color="#b5742b"/><stop offset="1" stop-color="#b2702a"/></linearGradient>
          <linearGradient id="b2" x1="0" x2="1" y1="0" y2="0"><stop offset="0" stop-color="#c3a875"/><stop offset=".12" stop-color="#c4a466"/><stop offset=".6" stop-color="#beaa7b"/><stop offset="1" stop-color="#b9a378"/></linearGradient>
          <linearGradient id="b3" x1="0" x2="1" y1="0" y2="0"><stop offset="0" stop-color="#d3a02f"/><stop offset=".35" stop-color="#c39a36"/><stop offset="1" stop-color="#bd9232"/></linearGradient>
        </defs>
        <path d="M0 0H1375V81H0Z" fill="url(#b1)"/><path d="M0 0H152L128 81H0Z" fill="#b98d3c"/>
        <path d="M1366 0H1535V81H1354Z" fill="#9b7e41"/><path d="M1526 0H2774V81H1542Z" fill="url(#b2)"/>
        <path d="M2398 0H2774V81H2580Q2480 44 2398 0Z" fill="url(#b3)"/>
        <path d="M2398 0H2440Q2530 50 2610 81H2580Q2480 44 2398 0Z" fill="#cc9423" opacity=".6"/>
      </svg>
      <div class="row">
        <div class="quick">
          ${icon(48, 48, svg`<path d="M0 7L21 4V23H0ZM23 3.500L48 0V23H23ZM0 25H21V44L0 41ZM23 25H48V48L23 44.500Z" fill="#fff"/>`)}
          <div class="s1">${icon(55, 43, svg`<defs><linearGradient id="dk" x1="0" y1="0" x2="1" y2="1"><stop offset="0" stop-color="#2c66cf"/><stop offset=".5" stop-color="#5a97ec"/><stop offset="1" stop-color="#2a5cc0"/></linearGradient></defs><rect x="1" y="1" width="53" height="41" fill="url(#dk)" stroke="#9fb4d0" stroke-width="2"/><path d="M2 35h51v6h-51z" fill="#3b4c66"/><path d="M2 41h51" stroke="#c6d2e2" stroke-width="2"/>`)}</div>
          <div class="s2">${icon(53, 53, svg`<circle cx="24" cy="24" r="24" fill="#f6c844"/><path d="M24 24L3.200 12A24 24 0 0 1 44.800 12Z" fill="#db4437"/><path d="M24 24L44.800 12H24Z" fill="#db4437"/><path d="M3.200 12A24 24 0 0 0 23 48L34 30L24 24Z" fill="#2a9a55"/><path d="M24 13H45.300A24 24 0 0 1 24 48L33.500 29.500Z" fill="#f6c844"/><circle cx="24" cy="24" r="11" fill="#f3f5f7"/><circle cx="24" cy="24" r="8.500" fill="#3f7fe8"/>`, "0 0 48 48")}</div>
          <div class="s3">${icon(54, 56, ieMark("ie1"))}</div>
          <div class="s4">${icon(53, 56, svg`<ellipse cx="26" cy="29" rx="26" ry="25.500" fill="#fff"/><ellipse cx="26" cy="29" rx="22.500" ry="22.500" fill="#5bb92f"/><path d="M16 26Q17 17 26 17Q34 17 35 26ZM16 33H49L47 40H33Q30 44 25 43Q17 41 16 33Z" fill="#fff"/><path d="M5 56Q0 50 6 40L9 44Q7 50 5 56ZM22 14Q36 8 49 1Q46 10 36 15Q28 12 22 14Z" fill="#4fae2a"/><path d="M6 40Q14 22 30 12" fill="none" stroke="#4fae2a" stroke-width="3"/>`)}</div>
          <div class="s5">${icon(38, 50, svg`<path d="M0 1H28L38 12V50H0Z" fill="#f6f8fb"/><path d="M28 1V12H38Z" fill="#8a94a3"/><g stroke="#cdd3dc" stroke-width="1.600"><path d="M3 8h22M3 14h30M3 20h32M3 26h32M3 32h32M3 38h32M3 44h32"/></g>`)}</div>
          <div class="s6">${icon(53, 50, svg`<path d="M3 8L18 6V36L9 42L1 36Z" fill="#d5dae2"/><path d="M4 14h8M4 20h8" stroke="#5d6878" stroke-width="2"/><path d="M0 40h16v6h-16z" fill="#b9bec8"/><path d="M16 0L52 4L47 40L10 32Z" fill="#dfe4ec"/><path d="M19 3L48 7L44 35L14 29Z" fill="#1420c8"/><path d="M30 4L48 7L44 35L38 34Z" fill="#3a55e0"/><path d="M28 36L40 38V43Q46 44 45 48H21Q19 44 28 42Z" fill="#e8ebf1"/>`)}</div>
          <div class="s7">${icon(57, 53, svg`<path d="M2 3L52 1L57 6V45L7 53L2 48Z" fill="#5a6680"/><path d="M1 2L52 1L54 42L4 50Z" fill="#bfdcf0"/><path d="M4 5L49 4L51 39L7 46Z" fill="#3f9fd6"/><path d="M10 18L46 15L47 33L12 37Z" fill="#5c5f66"/><path d="M10 18L18 17L20 36L12 37Z" fill="#d5d8dc"/><circle cx="30" cy="27" r="9" fill="#c9cdd3" stroke="#3c3f46" stroke-width="2.500"/><circle cx="30" cy="27" r="4" fill="#4d5260"/><path d="M31 4L34 10L41 9L37 14L41 19L34 18L30 22L27 18L20 19L25 14L22 9L29 11Z" fill="#f8e13c"/>`)}</div>
          <div class="chev">${icon(14, 14, svg`<path d="M1 1L6 7L1 13M8 1L13 7L8 13" fill="none" stroke="#fff" stroke-width="2.400"/>`)}</div>
        </div>
        <div class="task t1">${icon(57, 55, folder)}</div><div class="edge"></div><div class="edge"></div>
        <div class="task t2">${icon(59, 58, svg`<path d="M2 13L9 11V47L2 43Z" fill="#5c2d91"/><path d="M9 11L44 44L44 57L2 15Z" fill="#8a4bcf"/><path d="M2 43L9 47L44 14V0Z" fill="#7a3cbf"/><path d="M30 26L58 49L43 57Z" fill="#9355d8"/><path d="M9 21V37L17 29Z" fill="#c79f64"/><path d="M43 20V38L32 29Z" fill="#c79f64"/><path d="M43 0L58 7V49L43 57Z" fill="#b67cf2"/>`)}</div>
        <div class="task t3">${icon(56, 56, ieMark("ie2"))}</div><div class="edge"></div>
        <div class="task t4 on">${icon(55, 54, svg`<defs><linearGradient id="wd" x1="0" y1="0" x2="1" y2="0"><stop offset="0" stop-color="#2c4f9e"/><stop offset="1" stop-color="#a9bce4"/></linearGradient></defs><path d="M1 46V14Q2 1 16 1H46V16L20 46Z" fill="url(#wd)"/><path d="M18 6L54 9L52 53L13 46Z" fill="#fdfdfe" stroke="#c4cbd8"/><path d="M20 13L24 25L28 16L31 26L37 12" fill="none" stroke="#2b4a9a" stroke-width="3.600"/><path d="M39 15l9 .6M39 21l9 .6M38 27l9 .7M20 31l27 2.500M19 37l28 3M18 43l28 3" stroke="#2b4a9a" stroke-width="3"/>`)}</div><div class="edge on"></div>
        <div class="task t5">${icon(52, 50, svg`<path d="M18 1L48 4L50 46L40 50Z" fill="#cfd9de"/><path d="M18 1L47 4L36 45L1 35Z" fill="#5fb2bb"/><path d="M18 1L30 2L16 38L1 35Z" fill="#8fcacf"/><path d="M36 45L47 4L51 44L42 50Z" fill="#e8edf0"/><path d="M18 2h29" stroke="#777" stroke-width="3" stroke-dasharray="2 2"/>`)}</div><div class="edge"></div>
        <div class="task t6">${icon(56, 54, svg`<path d="M1 46V14Q2 1 16 1H46V16L20 46Z" fill="#bcd6b5"/><path d="M1 46V14Q2 1 16 1L8 14V42Z" fill="#4c9650"/><path d="M14 8L55 12L53 53L7 46Z" fill="#fbfdfa" stroke="#b9c9b7"/><path d="M15 14L33 33M33 14L15 32" stroke="#1f6b2c" stroke-width="6.500"/><path d="M38 17h11v6h-11zM38 27h11v6h-11zM37 38h12v8h-12zM10 36h9v6h-9zM22 37h12v7h-12z" fill="#3f9148"/>`)}</div>
        <div class="sys">
          ${icon(14, 10, svg`<path d="M0 10h14l-7-10z" fill="#fff" stroke="#7d6c47" stroke-width=".8"/>`)}
          <div class="vol">${icon(26, 30, svg`<path d="M1 9h5L14 1V29L6 21H1Z" fill="#fff" stroke="#6d5e40" stroke-width="1.200"/><path d="M20 9q4 6 0 12" fill="none" stroke="#f3ead6" stroke-width="2"/>`)}</div>
          <div class="flag">${icon(30, 32, svg`<path d="M2 1v30" stroke="#fff" stroke-width="3"/><path d="M4 3L14 4V8H26V20L12 18L4 17Z" fill="#fff" stroke="#6d5e40" stroke-width=".8"/>${cross}`)}</div>
          <div class="net">${icon(30, 32, svg`<path d="M4 8v20h10M4 4h24v6" fill="none" stroke="#5f523a" stroke-width="4"/><path d="M4 8v20h10M4 4h24v6" fill="none" stroke="#f3ead6" stroke-width="1.600"/><circle cx="4" cy="5" r="4" fill="#fff" stroke="#5f523a"/>${cross}`)}</div>
          <div class="zh">${icon(24, 32, svg`<g fill="none" stroke="#5f523a" stroke-width="5"><rect x="3" y="9" width="18" height="12"/><path d="M12 1v30"/></g><g fill="none" stroke="#fff" stroke-width="2.200"><rect x="3" y="9" width="18" height="12"/><path d="M12 1v30"/></g>`)}</div>
          ${icon(28, 34, sogou, "0 0 42 40")}
          <div class="clock">21:43<br>2022/3/25</div>
        </div>
      </div>`;
  }
}

/* ================= window ================= */
@customElement("app-root")
class AppRoot extends LitElement {
  static styles = [docStyles, css`
    :host { display: block; position: relative; width: 2774px; height: 1562px; overflow: hidden; background: #fff; }
    .col { display: flex; flex-direction: column; }
    .orb { position: absolute; left: 10px; top: 9px; }
    .frame { position: absolute; inset: 0; border: solid #f2f6f8; border-width: 2px 2px 3px 2px; box-shadow: inset 0 0 0 1.500px #8fbad6; pointer-events: none; }
  `];
  render() {
    return html`
      <div class="col"><title-bar></title-bar><word-ribbon></word-ribbon><doc-view></doc-view><status-bar></status-bar><task-bar></task-bar></div>
      <div class="orb">${icon(68, 70, svg`
        <defs><radialGradient id="ob" cx=".5" cy=".35" r=".65"><stop offset="0" stop-color="#fff"/><stop offset=".6" stop-color="#dbe3ef"/><stop offset="1" stop-color="#a9b7cc"/></radialGradient></defs>
        <ellipse cx="33" cy="35" rx="33" ry="34" fill="#8492aa"/><ellipse cx="33" cy="34" rx="31.500" ry="32.500" fill="url(#ob)"/>
        <path d="M3 34h60q-2 30-30 32q-28-2-30-32z" fill="#c4d0e2" opacity=".7"/><ellipse cx="33" cy="54" rx="20" ry="12" fill="#fff" opacity=".7"/>
        <g fill="none" stroke-linejoin="round"><path d="M15.500 16L31 15L32 30L16.500 32Z" stroke="#dd5026" stroke-width="6"/><path d="M38 22L48 23L47 33L38 33Z" stroke="#3c9bd8" stroke-width="5"/><path d="M18 38L33 38L32 53L19 53Z" stroke="#f2b82a" stroke-width="6"/><path d="M38 38L51 37L51 49L38 50Z" stroke="#58a53a" stroke-width="5.500"/></g>`)}</div>
      <div class="frame"></div>`;
  }
}
